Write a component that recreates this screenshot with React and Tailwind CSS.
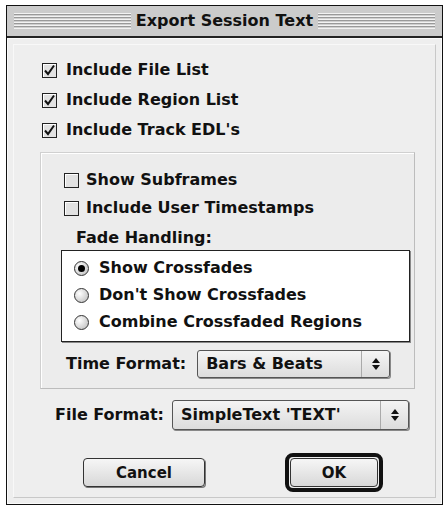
import React from "react";

const font = { fontFamily: '"DejaVu Sans", Verdana, sans-serif' };

const CheckBox = ({ checked }) => (
  <span className="inline-flex h-[15px] w-[15px] shrink-0 items-center justify-center border border-[#222] bg-[#e2e2e2] shadow-[inset_1px_1px_0_#fff]">
    {checked && (
      <svg width="13" height="13" viewBox="0 0 13 13">
        <path d="M2 6.5 L5 10 L11 1.5" fill="none" stroke="#111" strokeWidth="2" />
      </svg>
    )}
  </span>
);

const Radio = ({ checked }) => (
  <span className="inline-flex h-[15px] w-[15px] shrink-0 items-center justify-center rounded-full border border-[#333] bg-[radial-gradient(circle_at_35%_35%,#ffffff,#b8b8b8)]">
    {checked && <span className="h-[7px] w-[7px] rounded-full bg-black" />}
  </span>
);

const Arrows = () => (
  <svg width="10" height="14" viewBox="0 0 10 14">
    <path d="M5 1 L9 6 L1 6 Z" fill="#111" />
    <path d="M5 13 L9 8 L1 8 Z" fill="#111" />
  </svg>
);

const Popup = ({ label, className }) => (
  <div
    className={`flex items-center rounded-[3px] border border-[#555] bg-[linear-gradient(#f4f4f4,#dcdcdc)] shadow-[1px_1px_0_#888] ${className}`}
  >
    <span className="flex-1 pl-[8px] text-[#111]">{label}</span>
    <span className="flex h-full w-[28px] items-center justify-center border-l border-[#aaa]">
      <Arrows />
    </span>
  </div>
);

const Stripes = () => (
  <div className="h-[16px] flex-1 bg-[repeating-linear-gradient(#f2f2f2_0px,#f2f2f2_1px,#999_1px,#999_2px,#cfcfcf_2px,#cfcfcf_3px)]" />
);

export default function App() {
  return (
    <div className="h-[509px] w-[448px] bg-white pl-[6px] pt-[5px]" style={font}>
      <div className="flex h-[500px] w-[437px] flex-col border border-[#111]">
        {/* title bar */}
        <div className="flex h-[32px] items-center gap-[5px] border-b-2 border-[#222] bg-[#cbcbcb] px-[7px]">
          <Stripes />
          <span className="text-[16px] font-bold text-[#111]">Export Session Text</span>
          <Stripes />
        </div>

        {/* body */}
        <div className="flex flex-1 flex-col border border-[#fafafa] bg-[#eeeeee] p-[5px]">
          <div className="flex flex-1 flex-col border border-l-[#f8f8f8] border-t-[#f8f8f8] border-r-[#c8c8c8] border-b-[#c8c8c8] pl-[26px] pr-[20px] pt-[16px] text-[16px] font-bold leading-[18px] text-[#111]">
            <div className="flex flex-col gap-[12px] pl-[2px]">
              <div className="flex items-center gap-[9px]"><CheckBox checked />Include File List</div>
              <div className="flex items-center gap-[9px]"><CheckBox checked />Include Region List</div>
              <div className="flex items-center gap-[9px]"><CheckBox checked />Include Track EDL's</div>
            </div>

            {/* group */}
            <div className="mt-[13px] h-[237px] border border-l-[#d0d0d0] border-t-[#d0d0d0] border-r-[#bcbcbc] border-b-[#bcbcbc] bg-[#ececec] pl-[20px] pr-[4px] pt-[18px] shadow-[inset_1px_1px_0_#fff]">
              <div className="flex flex-col gap-[10px] pl-[3px]">
                <div className="flex items-center gap-[7px]"><CheckBox />Show Subframes</div>
                <div className="flex items-center gap-[7px]"><CheckBox />Include User Timestamps</div>
              </div>
              <div className="mt-[12px] pl-[15px]">Fade Handling:</div>
              <div className="mt-[3px] flex h-[92px] flex-col gap-[9px] border border-[#222] bg-white pl-[12px] pt-[8px] shadow-[1px_1px_0_#888]">
                <div className="flex items-center gap-[10px]"><Radio checked />Show Crossfades</div>
                <div className="flex items-center gap-[10px]"><Radio />Don't Show Crossfades</div>
                <div className="flex items-center gap-[10px]"><Radio />Combine Crossfaded Regions</div>
              </div>
              <div className="mt-[8px] flex items-center gap-[11px] pl-[5px]">
                <span>Time Format:</span>
                <Popup label="Bars & Beats" className="h-[28px] w-[193px]" />
              </div>
            </div>

            <div className="mt-[11px] flex items-center gap-[8px] pl-[15px]">
              <span>File Format:</span>
              <Popup label="SimpleText 'TEXT'" className="h-[30px] w-[237px]" />
            </div>

            <div className="mt-[23px] flex items-start">
              <button className="ml-[43px] mt-[5px] h-[29px] w-[122px] rounded-[4px] border border-[#333] bg-[linear-gradient(#f6f6f6,#d8d8d8)] text-[15px] font-bold shadow-[1px_1px_0_#777]">
                Cancel
              </button>
              <div className="ml-[80px] rounded-[8px] border-[4px] border-[#111] p-[1px]">
                <button className="block h-[29px] w-[88px] rounded-[4px] border border-[#333] bg-[linear-gradient(#f6f6f6,#d8d8d8)] text-[15px] font-bold">
                  OK
                </button>
              </div>
            </div>
          </div>
        </div>
      </div>
    </div>
  );
}
